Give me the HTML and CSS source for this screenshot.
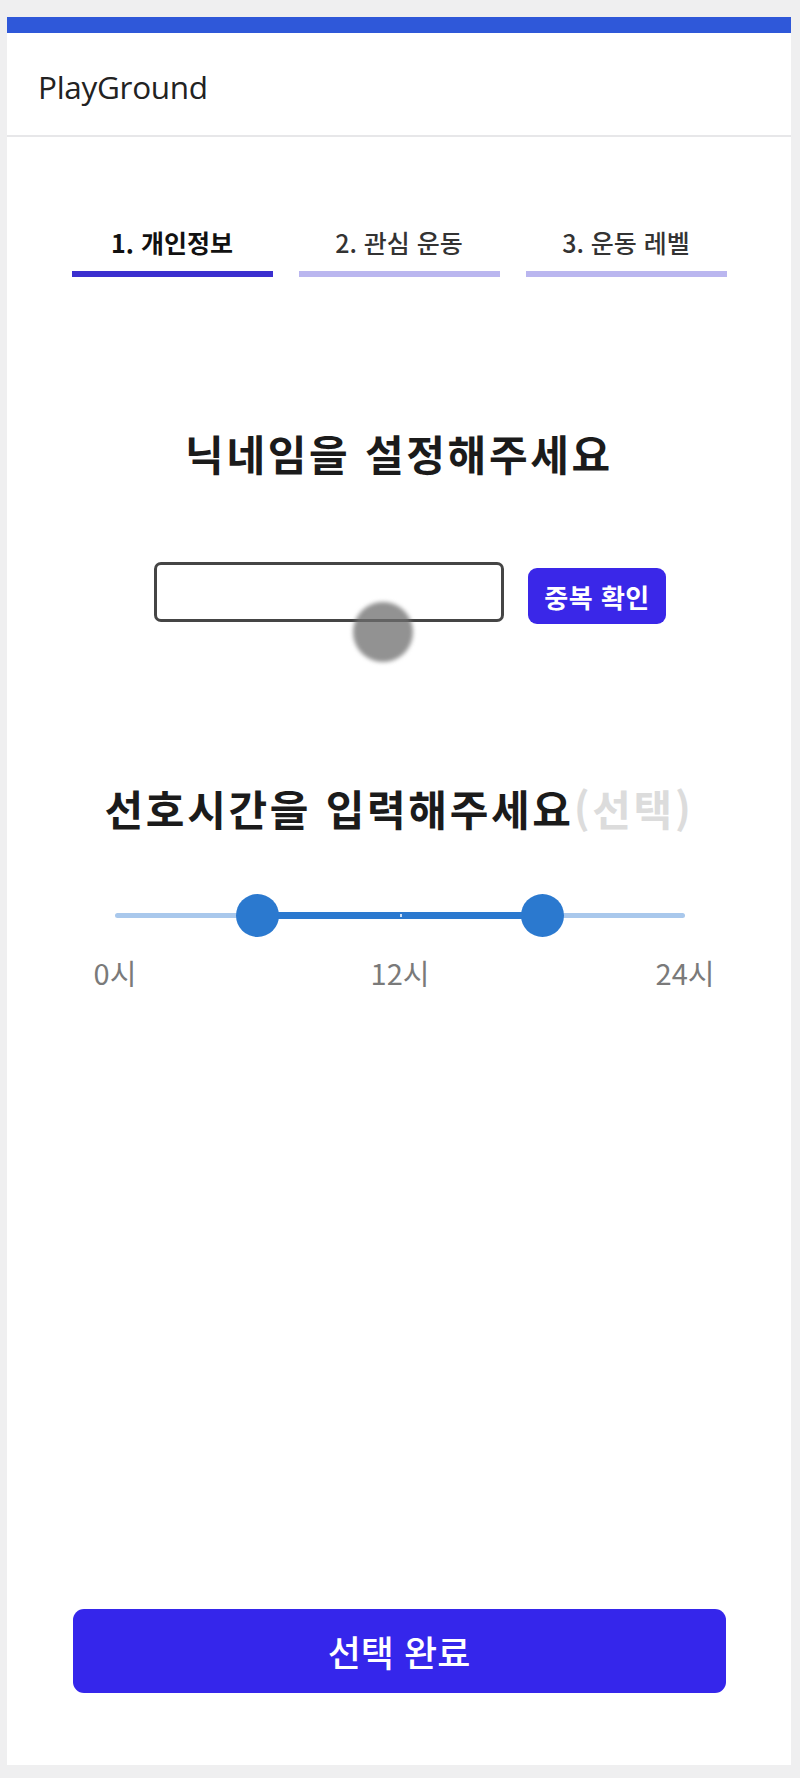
FILE: index.html
```html
<!DOCTYPE html>
<html lang="ko">
<head>
<meta charset="utf-8">
<title>PlayGround</title>
<link rel="stylesheet" href="styles.css">
</head>
<body>
<div class="card">
  <div class="topbar"></div>
  <header class="header"><span class="brand">PlayGround</span></header>
  <main class="main">
    <nav class="tabs">
      <div class="tab active"><span class="tab-label">1. 개인정보</span><span class="tab-bar"></span></div>
      <div class="tab"><span class="tab-label">2. 관심 운동</span><span class="tab-bar"></span></div>
      <div class="tab"><span class="tab-label">3. 운동 레벨</span><span class="tab-bar"></span></div>
    </nav>

    <h2 class="title first">닉네임을 설정해주세요</h2>
    <div class="nick-row">
      <div class="nick-input"></div>
      <button class="dup-btn">중복 확인</button>
      <span class="touch"></span>
    </div>

    <h2 class="title second">선호시간을 입력해주세요<span class="optional">(선택)</span></h2>
    <div class="slider">
      <div class="rail"></div>
      <div class="range" style="left:25%;width:50%"></div>
      <span class="mid-mark"></span>
      <span class="thumb" style="left:25%"></span>
      <span class="thumb" style="left:75%"></span>
      <span class="mark-label" style="left:0%">0시</span>
      <span class="mark-label" style="left:50%">12시</span>
      <span class="mark-label" style="left:100%">24시</span>
    </div>

    <button class="submit">선택 완료</button>
  </main>
</div>
</body>
</html>
```

FILE: styles.css
```css
* { box-sizing: border-box; }
html, body { margin: 0; padding: 0; }
body {
  background: #efeff0;
  font-family: "Noto Sans CJK KR", "Noto Sans", sans-serif;
  color: #1a1a1a;
}
.card {
  margin: 17px 9px 13px 7px;
  height: 1748px;
  background: #fff;
  display: flex;
  flex-direction: column;
}
.topbar {
  height: 16px;
  background: #2f58d9;
}
.header {
  height: 104px;
  border-bottom: 2px solid #e7e7e9;
  display: flex;
  align-items: center;
  padding-left: 31px;
  padding-top: 4px;
}
.brand {
  font-family: "Open Sans", "Noto Sans", sans-serif;
  font-size: 31.5px;
  color: #222;
  letter-spacing: -0.3px;
}
.main {
  flex: 1;
  display: flex;
  flex-direction: column;
  align-items: center;
  position: relative;
}
.tabs {
  display: flex;
  gap: 26px;
  margin-top: 89px;
}
.tab {
  width: 201px;
  display: flex;
  flex-direction: column;
  align-items: center;
}
.tab-label {
  font-size: 25px;
  line-height: 32px;
  font-weight: 500;
  color: #333;
}
.tab.active .tab-label {
  font-weight: 700;
  color: #111;
}
.tab-bar {
  margin-top: 13px;
  width: 100%;
  height: 6px;
  background: #bab6ef;
}
.tab.active .tab-bar { background: #3b2fcf; }

.title {
  margin: 0;
  font-size: 42px;
  line-height: 49px;
  font-weight: 700;
  color: #1b1b1b;
  letter-spacing: 2.7px;
  text-align: center;
}
.title.first { margin-top: 151px; }
.title.second { margin-top: 159px; }
.optional { color: #dcdcdc; }

.nick-row {
  margin-top: 85px;
  margin-left: 22px;
  display: flex;
  align-items: flex-start;
  gap: 24px;
  position: relative;
}
.nick-input {
  width: 350px;
  height: 60px;
  border: 3px solid #454545;
  border-radius: 7px;
  background: #fff;
}
.dup-btn {
  margin-top: 6px;
  width: 138px;
  height: 56px;
  border: none;
  border-radius: 9px;
  background: #3a27e8;
  color: #fff;
  font-family: "Noto Sans CJK KR", sans-serif;
  font-size: 26px;
  font-weight: 700;
  letter-spacing: 0.5px;
  padding: 0;
}
.touch {
  position: absolute;
  left: 199px;
  top: 40px;
  width: 60px;
  height: 60px;
  border-radius: 50%;
  background: rgba(110, 110, 110, 0.75);
  filter: blur(2px);
}

.slider {
  position: relative;
  width: 570px;
  height: 100px;
  margin-top: 60px;
  margin-left: 2px;
}
.rail {
  position: absolute;
  left: 0;
  right: 0;
  top: 21px;
  height: 5px;
  border-radius: 3px;
  background: #a9c8ec;
}
.range {
  position: absolute;
  top: 20px;
  height: 7px;
  background: #2b79cf;
}
.mid-mark {
  position: absolute;
  left: 50%;
  top: 22px;
  width: 2px;
  height: 3px;
  background: #cfe0f5;
}
.thumb {
  position: absolute;
  top: 2px;
  width: 43px;
  height: 43px;
  margin-left: -21.5px;
  border-radius: 50%;
  background: #2b79cf;
}
.mark-label {
  position: absolute;
  top: 64px;
  transform: translateX(-50%);
  font-size: 29px;
  line-height: 32px;
  color: #7a7a7a;
  white-space: nowrap;
}

.submit {
  margin-top: auto;
  margin-bottom: 72px;
  width: 653px;
  height: 84px;
  border: none;
  border-radius: 11px;
  background: #3526eb;
  color: #fff;
  font-family: "Noto Sans CJK KR", sans-serif;
  font-size: 36px;
  font-weight: 500;
  padding: 0;
}
```
